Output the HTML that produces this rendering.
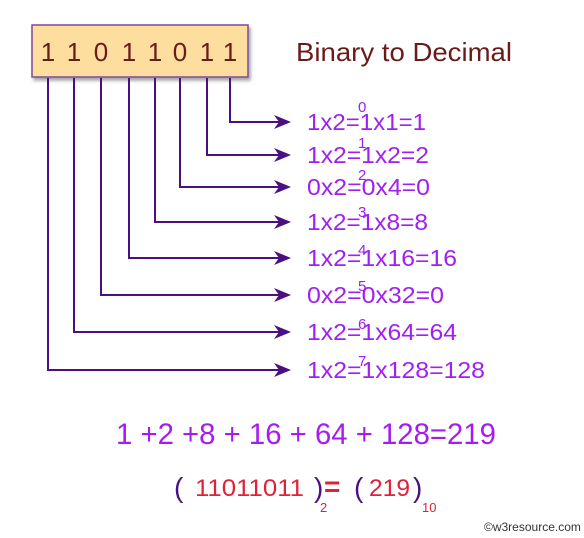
<!DOCTYPE html>
<html><head><meta charset="utf-8"><style>
html,body{margin:0;padding:0;background:#fff;width:584px;height:538px;overflow:hidden}
</style></head><body>
<svg width="584" height="538" viewBox="0 0 584 538" xmlns="http://www.w3.org/2000/svg" font-family="Liberation Sans, sans-serif">
<defs><filter id="sh" x="-10%" y="-10%" width="130%" height="140%"><feDropShadow dx="2" dy="3" stdDeviation="1.5" flood-color="#000" flood-opacity="0.35"/></filter></defs>
<rect x="32" y="25" width="216" height="52" fill="#fdde9f" stroke="#7a4a9a" stroke-width="1.5" filter="url(#sh)"/>
<g fill="#6b1a1a" font-size="26" text-anchor="middle">
<text x="48" y="61">1</text><text x="74" y="61">1</text><text x="101" y="61">0</text><text x="129" y="61">1</text><text x="155" y="61">1</text><text x="180" y="61">0</text><text x="207" y="61">1</text><text x="230" y="61">1</text>
</g>
<text x="296" y="61" fill="#6b1a1a" font-size="26" textLength="216" lengthAdjust="spacingAndGlyphs">Binary to Decimal</text>
<g stroke="#4b0f82" stroke-width="2" fill="none">
<path d="M230 78V122H288"/><path d="M207 78V155H288"/><path d="M180 78V187H288"/><path d="M155 78V222H288"/><path d="M129 78V258H288"/><path d="M101 78V295H288"/><path d="M74 78V332H288"/><path d="M48 78V370H288"/>
</g>
<g fill="#4b0f82">
<path d="M274 115L291 122L274 129L279 122Z"/><path d="M274 148L291 155L274 162L279 155Z"/><path d="M274 180L291 187L274 194L279 187Z"/><path d="M274 215L291 222L274 229L279 222Z"/><path d="M274 251L291 258L274 265L279 258Z"/><path d="M274 288L291 295L274 302L279 295Z"/><path d="M274 325L291 332L274 339L279 332Z"/><path d="M274 363L291 370L274 377L279 370Z"/>
</g>
<g fill="#a020f0" font-size="23">
<text x="307" y="130" textLength="119" lengthAdjust="spacingAndGlyphs">1x2=1x1=1</text>
<text x="307" y="163" textLength="122" lengthAdjust="spacingAndGlyphs">1x2=1x2=2</text>
<text x="307" y="195" textLength="123" lengthAdjust="spacingAndGlyphs">0x2=0x4=0</text>
<text x="307" y="230" textLength="121" lengthAdjust="spacingAndGlyphs">1x2=1x8=8</text>
<text x="307" y="266" textLength="150" lengthAdjust="spacingAndGlyphs">1x2=1x16=16</text>
<text x="307" y="303" textLength="137" lengthAdjust="spacingAndGlyphs">0x2=0x32=0</text>
<text x="307" y="340" textLength="150" lengthAdjust="spacingAndGlyphs">1x2=1x64=64</text>
<text x="307" y="378" textLength="178" lengthAdjust="spacingAndGlyphs">1x2=1x128=128</text>
</g>
<g fill="#a020f0" font-size="15">
<text x="358" y="112">0</text><text x="358" y="148">1</text><text x="358" y="180">2</text><text x="358" y="217">3</text><text x="358" y="255">4</text><text x="358" y="291">5</text><text x="358" y="329">6</text><text x="358" y="366">7</text>
</g>
<text x="116" y="444" fill="#a61cf0" font-size="30" textLength="380" lengthAdjust="spacingAndGlyphs">1 +2 +8 + 16 + 64 + 128=219</text>
<text x="174" y="497" fill="#4b0f82" font-size="28">(</text>
<text x="195" y="496" fill="#e0213a" font-size="24" textLength="109" lengthAdjust="spacingAndGlyphs">11011011</text>
<text x="314" y="497" fill="#4b0f82" font-size="28">)</text>
<text x="324" y="496" fill="#e0213a" font-size="28" font-weight="bold">=</text>
<text x="354" y="497" fill="#4b0f82" font-size="28">(</text>
<text x="369" y="496" fill="#e0213a" font-size="24" textLength="41" lengthAdjust="spacingAndGlyphs">219</text>
<text x="413" y="497" fill="#4b0f82" font-size="28">)</text>
<text x="320" y="512" fill="#e0213a" font-size="13">2</text>
<text x="422" y="512" fill="#e0213a" font-size="13">10</text>
<text x="484" y="531" fill="#333" font-size="12">©w3resource.com</text>
</svg>
</body></html>
